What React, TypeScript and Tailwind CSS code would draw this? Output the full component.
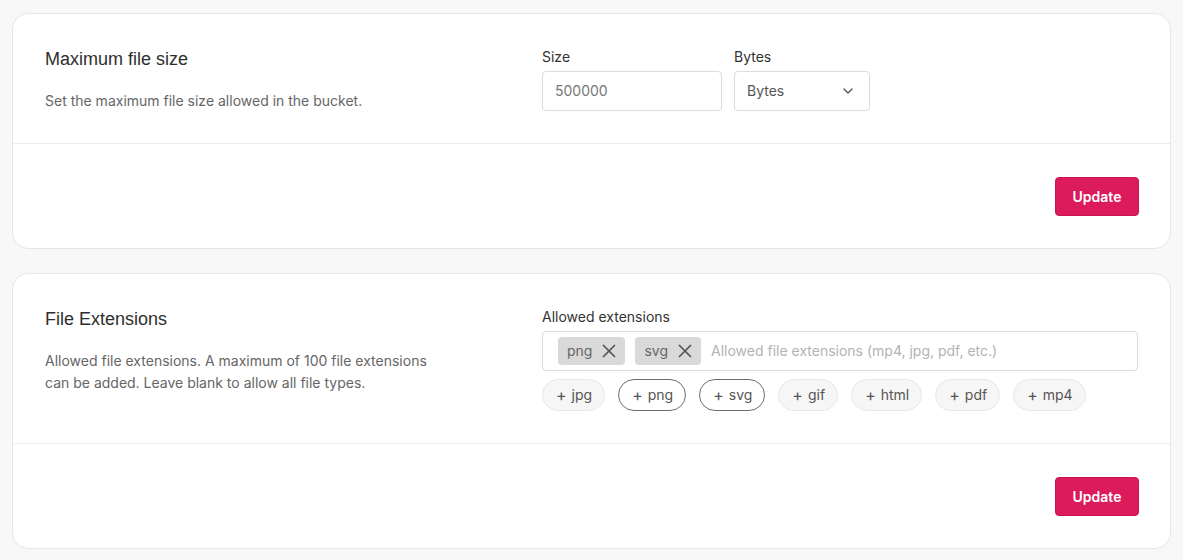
import React from "react";
import { ChevronDown, X } from "lucide-react";

const inter = { fontFamily: "Inter, 'Noto Sans', sans-serif" };

function Card({ children, pb }: { children: React.ReactNode; pb: string }) {
  return (
    <div className="bg-white border border-[#e6e6e6] rounded-[16px]">
      <div className={"px-8 pt-[33px] flex " + pb}>{children}</div>
      <div className="border-t border-[#ececec] pl-8 pr-[31px] pt-[33px] pb-8 flex justify-end">
        <button className="h-[39px] w-[84px] rounded-[4px] bg-[#dc1b5c] text-white text-sm font-semibold border border-[#c8154f]">
          Update
        </button>
      </div>
    </div>
  );
}

function Left({ title, desc }: { title: string; desc: React.ReactNode }) {
  return (
    <div className="w-[497px] shrink-0">
      <div className="text-[18px] leading-6 text-[#2e2e2e]" style={{ fontFamily: "'Liberation Sans', Arial, sans-serif" }}>
        {title}
      </div>
      <div className="mt-[19px] text-sm leading-[22px] text-[#666666] max-w-[390px]">{desc}</div>
    </div>
  );
}

export default function App() {
  const chips = [
    { t: "jpg", sel: false },
    { t: "png", sel: true },
    { t: "svg", sel: true },
    { t: "gif", sel: false },
    { t: "html", sel: false },
    { t: "pdf", sel: false },
    { t: "mp4", sel: false },
  ];
  return (
    <div className="min-h-[560px] bg-[#f8f8f8] px-3 pt-[13px] pb-3 flex flex-col gap-6" style={inter}>
      <Card pb="pb-[31px]">
        <Left title="Maximum file size" desc="Set the maximum file size allowed in the bucket." />
        <div className="flex-1 flex gap-3">
          <div className="w-[180px]">
            <div className="text-sm leading-5 text-[#333333]">Size</div>
            <div className="mt-1 h-10 border border-[#dcdcdc] rounded-[4px] flex items-center px-3 text-sm text-[#777777]">
              500000
            </div>
          </div>
          <div className="w-[136px]">
            <div className="text-sm leading-5 text-[#333333]">Bytes</div>
            <div className="mt-1 h-10 border border-[#dcdcdc] rounded-[4px] flex items-center justify-between pl-3 pr-[13px] text-sm text-[#555555]">
              <span>Bytes</span>
              <ChevronDown size={16} strokeWidth={2} className="text-[#555555]" />
            </div>
          </div>
        </div>
      </Card>
      <Card pb="pb-8">
        <Left
          title="File Extensions"
          desc={
            <>
              Allowed file extensions. A maximum of 100 file extensions
              <br />
              can be added. Leave blank to allow all file types.
            </>
          }
        />
        <div className="flex-1">
          <div className="text-sm leading-5 text-[#333333]">Allowed extensions</div>
          <div className="mt-1 h-10 border border-[#dcdcdc] rounded-[4px] flex items-center pl-[15px] gap-[10px] text-sm">
            {["png", "svg"].map((t) => (
              <span key={t} className="h-7 rounded-[4px] bg-[#d9d9d9] flex items-center gap-[6px] pl-[9px] pr-[5px] text-[#666666]">
                {t}
                <X size={22} strokeWidth={1.9} className="text-[#555555]" />
              </span>
            ))}
            <span className="text-[#b3b3b3]">Allowed file extensions (mp4, jpg, pdf, etc.)</span>
          </div>
          <div className="mt-2 flex gap-[13px]">
            {chips.map((c) => (
              <span
                key={c.t}
                className={
                  c.sel
                    ? "h-8 rounded-full border border-[#6e6e6e] bg-white pl-[13px] pr-[12px] flex items-center text-sm text-[#555555]"
                    : "h-8 rounded-full border border-[#e8e8e8] bg-[#f6f6f6] pl-[13px] pr-[12px] flex items-center text-sm text-[#555555]"
                }
              >
                <span className="text-[16px] leading-none mr-[5px]">+</span>
                {c.t}
              </span>
            ))}
          </div>
        </div>
      </Card>
    </div>
  );
}
